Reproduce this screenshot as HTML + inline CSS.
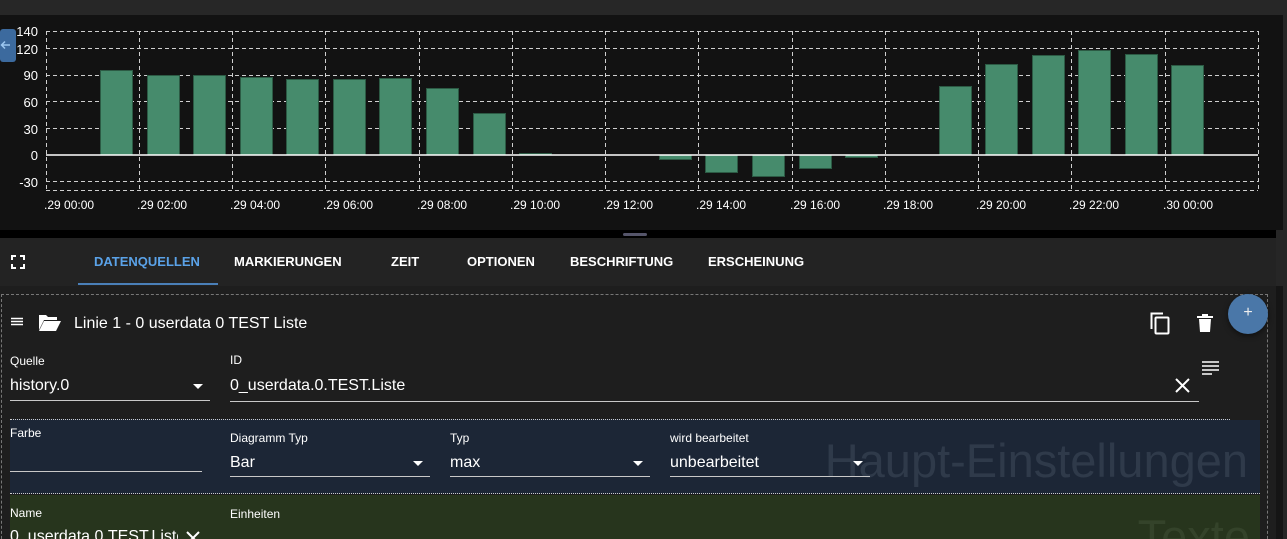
<!DOCTYPE html>
<html style="overflow:hidden;width:1287px;height:539px"><head><meta charset="utf-8"><style>
*{margin:0;padding:0;box-sizing:border-box}
body{width:1287px;height:539px;overflow:hidden;background:#262626;font-family:"Liberation Sans",Arial,sans-serif;color:#fff;position:relative}
.a{position:absolute}
.lbl{font-size:12px;color:#fff}
.val{font-size:16px;color:#fff}
.ul{border-bottom:1px solid #c8c8c8}
.tab{font-size:13px;font-weight:bold;top:254px;letter-spacing:0}
.arr{width:0;height:0;border-left:5px solid transparent;border-right:5px solid transparent;border-top:5px solid #fff}
</style></head><body>
<div class="a" style="left:0;top:0;width:1287px;height:15px;background:#272727"></div>
<div class="a" style="left:0;top:15px;width:1283px;height:215px;background:#121212"></div>
<div class="a" style="left:0;top:230px;width:1276px;height:8px;background:#000"></div>
<div class="a" style="left:623px;top:233px;width:24px;height:3px;background:#55556a;border-radius:2px"></div>
<svg class="a" style="left:0;top:0" width="1287" height="230">
<g stroke="#cfcfcf" stroke-width="1" stroke-dasharray="4,3" fill="none">
<line x1="46" y1="31.5" x2="1258" y2="31.5"/><line x1="46" y1="48.5" x2="1258" y2="48.5"/>
<line x1="46" y1="75.5" x2="1258" y2="75.5"/><line x1="46" y1="101.5" x2="1258" y2="101.5"/>
<line x1="46" y1="128.5" x2="1258" y2="128.5"/><line x1="46" y1="181.5" x2="1258" y2="181.5"/>
<line x1="46" y1="190.5" x2="1258" y2="190.5"/>
<line x1="46.5" y1="31" x2="46.5" y2="190"/><line x1="139.5" y1="31" x2="139.5" y2="190"/>
<line x1="232.5" y1="31" x2="232.5" y2="190"/><line x1="325.5" y1="31" x2="325.5" y2="190"/>
<line x1="419.5" y1="31" x2="419.5" y2="190"/><line x1="512.5" y1="31" x2="512.5" y2="190"/>
<line x1="605.5" y1="31" x2="605.5" y2="190"/><line x1="698.5" y1="31" x2="698.5" y2="190"/>
<line x1="792.5" y1="31" x2="792.5" y2="190"/><line x1="885.5" y1="31" x2="885.5" y2="190"/>
<line x1="978.5" y1="31" x2="978.5" y2="190"/><line x1="1071.5" y1="31" x2="1071.5" y2="190"/>
<line x1="1165.5" y1="31" x2="1165.5" y2="190"/><line x1="1258.5" y1="31" x2="1258.5" y2="190"/>
</g>
<g fill="#468b6c" stroke="#2c5a44" stroke-width="1">
<rect x="100.5" y="70.5" width="32" height="84.5"/><rect x="147.5" y="75.5" width="32" height="79.5"/>
<rect x="193.5" y="75.5" width="32" height="79.5"/><rect x="240.5" y="77.5" width="32" height="77.5"/>
<rect x="286.5" y="79.5" width="32" height="75.5"/><rect x="333.5" y="79.5" width="32" height="75.5"/>
<rect x="379.5" y="78.5" width="32" height="76.5"/><rect x="426.5" y="88.5" width="32" height="66.5"/>
<rect x="473.5" y="113.5" width="32" height="41.5"/><rect x="519.5" y="153.5" width="32" height="1.5"/>
<rect x="939.5" y="86.5" width="32" height="68.5"/><rect x="985.5" y="64.5" width="32" height="90.5"/>
<rect x="1032.5" y="55.5" width="32" height="99.5"/><rect x="1078.5" y="50.5" width="32" height="104.5"/>
<rect x="1125.5" y="54.5" width="32" height="100.5"/><rect x="1171.5" y="65.5" width="32" height="89.5"/>
<rect x="659.5" y="155" width="32" height="4.5"/><rect x="705.5" y="155" width="32" height="17.5"/>
<rect x="752.5" y="155" width="32" height="21.5"/><rect x="799.5" y="155" width="32" height="13.5"/>
<rect x="845.5" y="155" width="32" height="2.5"/>
</g>
<line x1="46" y1="155" x2="1258" y2="155" stroke="#fff" stroke-width="1.5"/>
<g fill="#fff" font-family="Liberation Sans,Arial,sans-serif" font-size="13" text-anchor="end">
<text x="38" y="36">140</text><text x="38" y="54">120</text><text x="38" y="80">90</text>
<text x="38" y="107">60</text><text x="38" y="134">30</text><text x="38" y="160">0</text><text x="38" y="187">-30</text>
</g>
<g fill="#fff" font-family="Liberation Sans,Arial,sans-serif" font-size="12">
<text x="44" y="209">.29 00:00</text><text x="137" y="209">.29 02:00</text><text x="230" y="209">.29 04:00</text>
<text x="323" y="209">.29 06:00</text><text x="417" y="209">.29 08:00</text><text x="510" y="209">.29 10:00</text>
<text x="603" y="209">.29 12:00</text><text x="696" y="209">.29 14:00</text><text x="790" y="209">.29 16:00</text>
<text x="883" y="209">.29 18:00</text><text x="976" y="209">.29 20:00</text><text x="1069" y="209">.29 22:00</text>
<text x="1163" y="209">.30 00:00</text>
</g>
<rect x="0" y="29" width="16" height="33" rx="3" fill="#3c6a9e"/>
<path d="M10 45 H2 M5 41.5 L1.5 45 L5 48.5" stroke="#9cc7f0" stroke-width="1.5" fill="none"/>
</svg>

<div class="a" style="left:0;top:238px;width:1276px;height:48px;background:#232323"></div>
<svg class="a" style="left:11px;top:255px" width="14" height="14"><path d="M1 5V1H5M9 1H13V5M13 9V13H9M5 13H1V9" stroke="#fff" stroke-width="2" fill="none"/></svg>
<div class="a tab" style="left:94px;color:#5aa2e8">DATENQUELLEN</div>
<div class="a" style="left:78px;top:283px;width:140px;height:2px;background:#4a7fb8"></div>
<div class="a tab" style="left:234px">MARKIERUNGEN</div>
<div class="a tab" style="left:391px">ZEIT</div>
<div class="a tab" style="left:467px">OPTIONEN</div>
<div class="a tab" style="left:570px">BESCHRIFTUNG</div>
<div class="a tab" style="left:708px">ERSCHEINUNG</div>

<div class="a" style="left:0;top:286px;width:1276px;height:253px;background:#1e1e1e;overflow:hidden">
<div class="a" style="left:1px;top:8px;width:1267px;height:260px;border:1px dashed #777"></div>
</div>
<div class="a" style="left:1276px;top:286px;width:7px;height:253px;background:#151515"></div>
<svg class="a" style="left:11px;top:317px" width="13" height="10"><path d="M0 1.5H12M0 4.5H12M0 7.5H12" stroke="#fff" stroke-width="1.5"/></svg>
<svg class="a" style="left:38px;top:313px" width="24" height="19"><path d="M1 2h7l2 2h9v3H6L1 17z" fill="#fff"/><path d="M6 8h17l-5 10H1z" fill="#fff"/></svg>
<div class="a" style="left:74px;top:315px;font-size:16px">Linie 1 - 0 userdata 0 TEST Liste</div>
<svg class="a" style="left:1150px;top:312px" width="22" height="24"><path d="M1.5 17V1.5H13" stroke="#fff" stroke-width="2" fill="none"/><rect x="5.5" y="5.5" width="13" height="16" rx="1" stroke="#fff" stroke-width="2" fill="none"/></svg>
<svg class="a" style="left:1197px;top:313px" width="16" height="20"><rect x="0" y="3" width="16" height="2" fill="#fff"/><rect x="5" y="1" width="6" height="2" fill="#fff"/><path d="M2 6h12l-1 13H3z" fill="#fff"/></svg>
<div class="a" style="left:1228px;top:294px;width:40px;height:40px;border-radius:50%;background:#4a77a8;box-shadow:0 2px 6px rgba(0,0,0,.5);text-align:center;line-height:38px;font-size:16px;color:#eee">+</div>

<div class="a lbl" style="left:10px;top:354px">Quelle</div>
<div class="a val" style="left:10px;top:377px">history.0</div>
<div class="a arr" style="left:193px;top:384px"></div>
<div class="a ul" style="left:10px;top:400px;width:200px"></div>
<div class="a lbl" style="left:230px;top:353px">ID</div>
<div class="a val" style="left:230px;top:377px">0_userdata.0.TEST.Liste</div>
<svg class="a" style="left:1175px;top:378px" width="15" height="15"><path d="M1 1L14 14M14 1L1 14" stroke="#fff" stroke-width="2"/></svg>
<div class="a ul" style="left:230px;top:401px;width:969px"></div>
<svg class="a" style="left:1202px;top:361px" width="18" height="15"><path d="M0 1H17M0 5H17M0 9H17M0 13H10" stroke="#fff" stroke-width="1.6"/></svg>

<div class="a" style="left:10px;top:419px;width:1250px;height:75px;background:#1c2636;border-top:1px dotted #ccc;border-bottom:1px dotted #ccc;overflow:hidden">
 <div class="a" style="right:12px;top:13px;font-size:47px;color:#2f3a4a;white-space:nowrap">Haupt-Einstellungen</div>
</div>
<div class="a" style="left:1230px;top:419px;width:30px;height:1px;background:#1e1e1e"></div>
<div class="a lbl" style="left:10px;top:426px">Farbe</div>
<div class="a ul" style="left:10px;top:471px;width:192px"></div>
<div class="a lbl" style="left:230px;top:431px">Diagramm Typ</div>
<div class="a val" style="left:230px;top:454px">Bar</div>
<div class="a arr" style="left:413px;top:461px"></div>
<div class="a ul" style="left:230px;top:476px;width:200px"></div>
<div class="a lbl" style="left:450px;top:431px">Typ</div>
<div class="a val" style="left:450px;top:454px">max</div>
<div class="a arr" style="left:633px;top:461px"></div>
<div class="a ul" style="left:450px;top:476px;width:200px"></div>
<div class="a lbl" style="left:670px;top:431px">wird bearbeitet</div>
<div class="a val" style="left:670px;top:454px">unbearbeitet</div>
<div class="a arr" style="left:853px;top:461px"></div>
<div class="a ul" style="left:670px;top:476px;width:200px"></div>

<div class="a" style="left:10px;top:495px;width:1250px;height:44px;background:#27351d;overflow:hidden">
 <div class="a" style="right:10px;top:14px;font-size:47px;color:#34432a">Texte</div>
</div>
<div class="a lbl" style="left:10px;top:506px">Name</div>
<div class="a val" style="left:10px;top:528px;width:168px;overflow:hidden;white-space:nowrap">0_userdata.0.TEST.Liste</div>
<svg class="a" style="left:186px;top:531px" width="14" height="14"><path d="M1 1L13 13M13 1L1 13" stroke="#fff" stroke-width="2"/></svg>
<div class="a lbl" style="left:230px;top:507px">Einheiten</div>
</body></html>
